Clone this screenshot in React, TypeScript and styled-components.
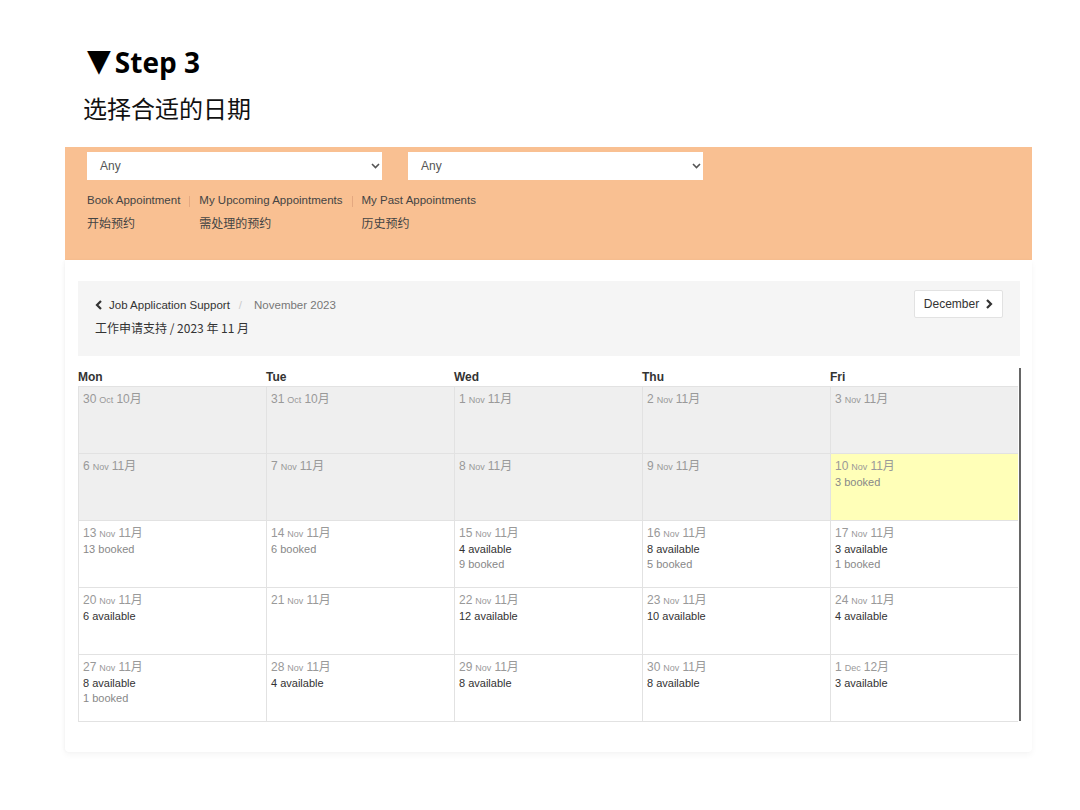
import React from "react";
import styled, { createGlobalStyle } from "styled-components";

const GlobalStyle = createGlobalStyle`
  html, body {
    margin: 0;
    padding: 0;
    background: #ffffff;
  }
  body {
    font-family: "Liberation Sans", Arial, "Noto Sans CJK SC", sans-serif;
    color: #333;
  }
`;

type Entry = { text: string; kind: "available" | "booked" };

type Day = {
  day: number;
  mon: string;
  cn: string;
  tone?: "past" | "today";
  entries?: Entry[];
};

const weeks: Day[][] = [
  [
    { day: 30, mon: "Oct", cn: "10月", tone: "past" },
    { day: 31, mon: "Oct", cn: "10月", tone: "past" },
    { day: 1, mon: "Nov", cn: "11月", tone: "past" },
    { day: 2, mon: "Nov", cn: "11月", tone: "past" },
    { day: 3, mon: "Nov", cn: "11月", tone: "past" },
  ],
  [
    { day: 6, mon: "Nov", cn: "11月", tone: "past" },
    { day: 7, mon: "Nov", cn: "11月", tone: "past" },
    { day: 8, mon: "Nov", cn: "11月", tone: "past" },
    { day: 9, mon: "Nov", cn: "11月", tone: "past" },
    {
      day: 10,
      mon: "Nov",
      cn: "11月",
      tone: "today",
      entries: [{ text: "3 booked", kind: "booked" }],
    },
  ],
  [
    { day: 13, mon: "Nov", cn: "11月", entries: [{ text: "13 booked", kind: "booked" }] },
    { day: 14, mon: "Nov", cn: "11月", entries: [{ text: "6 booked", kind: "booked" }] },
    {
      day: 15,
      mon: "Nov",
      cn: "11月",
      entries: [
        { text: "4 available", kind: "available" },
        { text: "9 booked", kind: "booked" },
      ],
    },
    {
      day: 16,
      mon: "Nov",
      cn: "11月",
      entries: [
        { text: "8 available", kind: "available" },
        { text: "5 booked", kind: "booked" },
      ],
    },
    {
      day: 17,
      mon: "Nov",
      cn: "11月",
      entries: [
        { text: "3 available", kind: "available" },
        { text: "1 booked", kind: "booked" },
      ],
    },
  ],
  [
    { day: 20, mon: "Nov", cn: "11月", entries: [{ text: "6 available", kind: "available" }] },
    { day: 21, mon: "Nov", cn: "11月" },
    { day: 22, mon: "Nov", cn: "11月", entries: [{ text: "12 available", kind: "available" }] },
    { day: 23, mon: "Nov", cn: "11月", entries: [{ text: "10 available", kind: "available" }] },
    { day: 24, mon: "Nov", cn: "11月", entries: [{ text: "4 available", kind: "available" }] },
  ],
  [
    {
      day: 27,
      mon: "Nov",
      cn: "11月",
      entries: [
        { text: "8 available", kind: "available" },
        { text: "1 booked", kind: "booked" },
      ],
    },
    { day: 28, mon: "Nov", cn: "11月", entries: [{ text: "4 available", kind: "available" }] },
    { day: 29, mon: "Nov", cn: "11月", entries: [{ text: "8 available", kind: "available" }] },
    { day: 30, mon: "Nov", cn: "11月", entries: [{ text: "8 available", kind: "available" }] },
    { day: 1, mon: "Dec", cn: "12月", entries: [{ text: "3 available", kind: "available" }] },
  ],
];

const weekdays = ["Mon", "Tue", "Wed", "Thu", "Fri"];

const ChevronDown = () => (
  <svg width="9" height="6" viewBox="0 0 9 6">
    <path d="M1 1l3.5 3.5L8 1" fill="none" stroke="#555" strokeWidth="1.6" />
  </svg>
);

const ChevronLeft = () => (
  <svg width="8" height="10" viewBox="0 0 8 10">
    <path d="M6 1L2 5l4 4" fill="none" stroke="#333" strokeWidth="2.2" />
  </svg>
);

const ChevronRight = () => (
  <svg width="8" height="10" viewBox="0 0 8 10">
    <path d="M2 1l4 4-4 4" fill="none" stroke="#333" strokeWidth="2.2" />
  </svg>
);

export default function App() {
  return (
    <>
      <GlobalStyle />
      <Page>
        <Heading>
          <Triangle>▼</Triangle>Step 3
        </Heading>
        <Subheading>选择合适的日期</Subheading>

        <Banner>
          <SelectRow>
            <FakeSelect>
              <span>Any</span>
              <ChevronDown />
            </FakeSelect>
            <FakeSelect>
              <span>Any</span>
              <ChevronDown />
            </FakeSelect>
          </SelectRow>
          <NavLinks>
            <NavItem>
              <NavEn>Book Appointment</NavEn>
              <NavCn>开始预约</NavCn>
            </NavItem>
            <NavSep />
            <NavItem>
              <NavEn>My Upcoming Appointments</NavEn>
              <NavCn>需处理的预约</NavCn>
            </NavItem>
            <NavSep />
            <NavItem>
              <NavEn>My Past Appointments</NavEn>
              <NavCn>历史预约</NavCn>
            </NavItem>
          </NavLinks>
        </Banner>

        <Card>
          <Crumbs>
            <CrumbText>
              <CrumbLine>
                <ChevronLeft />
                <span>Job Application Support</span>
                <CrumbSlash>/</CrumbSlash>
                <CrumbCurrent>November 2023</CrumbCurrent>
              </CrumbLine>
              <CrumbCn>工作申请支持 / 2023 年 11 月</CrumbCn>
            </CrumbText>
            <NextButton>
              December
              <ChevronRight />
            </NextButton>
          </Crumbs>

          <Calendar>
            {weekdays.map((w) => (
              <WeekdayHead key={w}>{w}</WeekdayHead>
            ))}
            {weeks.flat().map((d, i) => (
              <Cell key={i} $tone={d.tone}>
                <DateLine>
                  <DayNum>{d.day}</DayNum>
                  <MonAbbr>{d.mon}</MonAbbr>
                  <MonCn>{d.cn}</MonCn>
                </DateLine>
                {d.entries?.map((e) => (
                  <EntryLine key={e.text} $kind={e.kind}>
                    {e.text}
                  </EntryLine>
                ))}
              </Cell>
            ))}
          </Calendar>
        </Card>
      </Page>
    </>
  );
}

const Page = styled.div`
  width: 1080px;
  height: 810px;
  box-sizing: border-box;
  padding: 42px 48px 0 65px;
  overflow: hidden;
`;

const Heading = styled.h1`
  margin: 0 0 0 22px;
  font-family: "Open Sans", "Liberation Sans", sans-serif;
  font-weight: 700;
  font-size: 28px;
  line-height: 40px;
  color: #000;
  display: flex;
  align-items: center;
`;

const Triangle = styled.span`
  font-family: "DejaVu Sans", sans-serif;
  font-size: 31px;
  margin-right: 4px;
  position: relative;
  top: -2px;
`;

const Subheading = styled.div`
  margin: 10px 0 0 18px;
  font-family: "Noto Sans CJK SC", sans-serif;
  font-size: 24px;
  line-height: 32px;
  color: #111;
`;

const Banner = styled.div`
  margin-top: 23px;
  height: 113px;
  box-sizing: border-box;
  background: #f9c092;
  padding: 5px 22px 0;
`;

const SelectRow = styled.div`
  display: flex;
  gap: 26px;
`;

const FakeSelect = styled.div`
  width: 295px;
  height: 28px;
  box-sizing: border-box;
  background: #fff;
  display: flex;
  align-items: center;
  justify-content: space-between;
  padding: 0 2px 0 13px;
  font-size: 12px;
  color: #555;
`;

const NavLinks = styled.div`
  display: flex;
  margin-top: 12px;
`;

const NavItem = styled.div`
  display: flex;
  flex-direction: column;
`;

const NavSep = styled.div`
  width: 1px;
  height: 11px;
  background: #e4a880;
  margin: 4px 9px 0;
`;

const NavEn = styled.span`
  font-size: 11.5px;
  line-height: 16px;
  color: #444;
  white-space: nowrap;
`;

const NavCn = styled.span`
  margin-top: 7px;
  font-family: "Noto Sans CJK SC", sans-serif;
  font-size: 12px;
  line-height: 16px;
  color: #444;
`;

const Card = styled.div`
  width: 967px;
  height: 492px;
  box-sizing: border-box;
  padding: 21px 12px 0 13px;
  background: #fff;
  box-shadow: 0 3px 6px rgba(0, 0, 0, 0.04), -1px 0 3px rgba(0, 0, 0, 0.03);
  border-radius: 0 0 4px 4px;
`;

const Crumbs = styled.div`
  height: 75px;
  box-sizing: border-box;
  background: #f5f5f5;
  padding: 9px 17px 0 17px;
  display: flex;
  justify-content: space-between;
  align-items: flex-start;
`;

const CrumbText = styled.div`
  display: flex;
  flex-direction: column;
  padding-top: 7px;
`;

const CrumbLine = styled.div`
  display: flex;
  align-items: center;
  gap: 6px;
  font-size: 11.5px;
  line-height: 16px;
  color: #333;
`;

const CrumbSlash = styled.span`
  color: #ccc;
  margin: 0 6px 0 3px;
`;

const CrumbCurrent = styled.span`
  color: #777;
`;

const CrumbCn = styled.div`
  margin-top: 7px;
  font-family: "Noto Sans CJK SC", sans-serif;
  font-size: 12px;
  line-height: 16px;
  color: #333;
`;

const NextButton = styled.div`
  height: 28px;
  width: 89px;
  box-sizing: border-box;
  background: #fff;
  border: 1px solid #e2e2e2;
  border-radius: 2px;
  display: flex;
  align-items: center;
  justify-content: center;
  gap: 6px;
  font-size: 12px;
  color: #333;
`;

const Calendar = styled.div`
  margin-top: 12px;
  width: 943px;
  display: grid;
  grid-template-columns: repeat(5, 188px);
  grid-auto-rows: 67px;
  grid-template-rows: 18px;
  border-right: 2px solid #666;
  box-sizing: border-box;
`;

const WeekdayHead = styled.div`
  font-weight: 700;
  font-size: 12px;
  line-height: 18px;
  color: #333;
`;

const Cell = styled.div<{ $tone?: "past" | "today" }>`
  box-sizing: border-box;
  border-left: 1px solid #e2e2e2;
  border-top: 1px solid #e2e2e2;
  border-bottom: 1px solid #e2e2e2;
  margin-bottom: -1px;
  padding: 5px 4px 0;
  background: ${(p) =>
    p.$tone === "past" ? "#efefef" : p.$tone === "today" ? "#ffffb8" : "#fff"};
`;

const DateLine = styled.div`
  display: flex;
  align-items: baseline;
  gap: 3px;
  color: #999;
  line-height: 15px;
`;

const DayNum = styled.span`
  font-size: 12px;
`;

const MonAbbr = styled.span`
  font-size: 9px;
`;

const MonCn = styled.span`
  font-family: "Liberation Sans", "Noto Sans CJK SC", sans-serif;
  font-size: 12px;
`;

const EntryLine = styled.div<{ $kind: "available" | "booked" }>`
  font-size: 11px;
  line-height: 15px;
  color: ${(p) => (p.$kind === "available" ? "#333" : "#888")};
`;
